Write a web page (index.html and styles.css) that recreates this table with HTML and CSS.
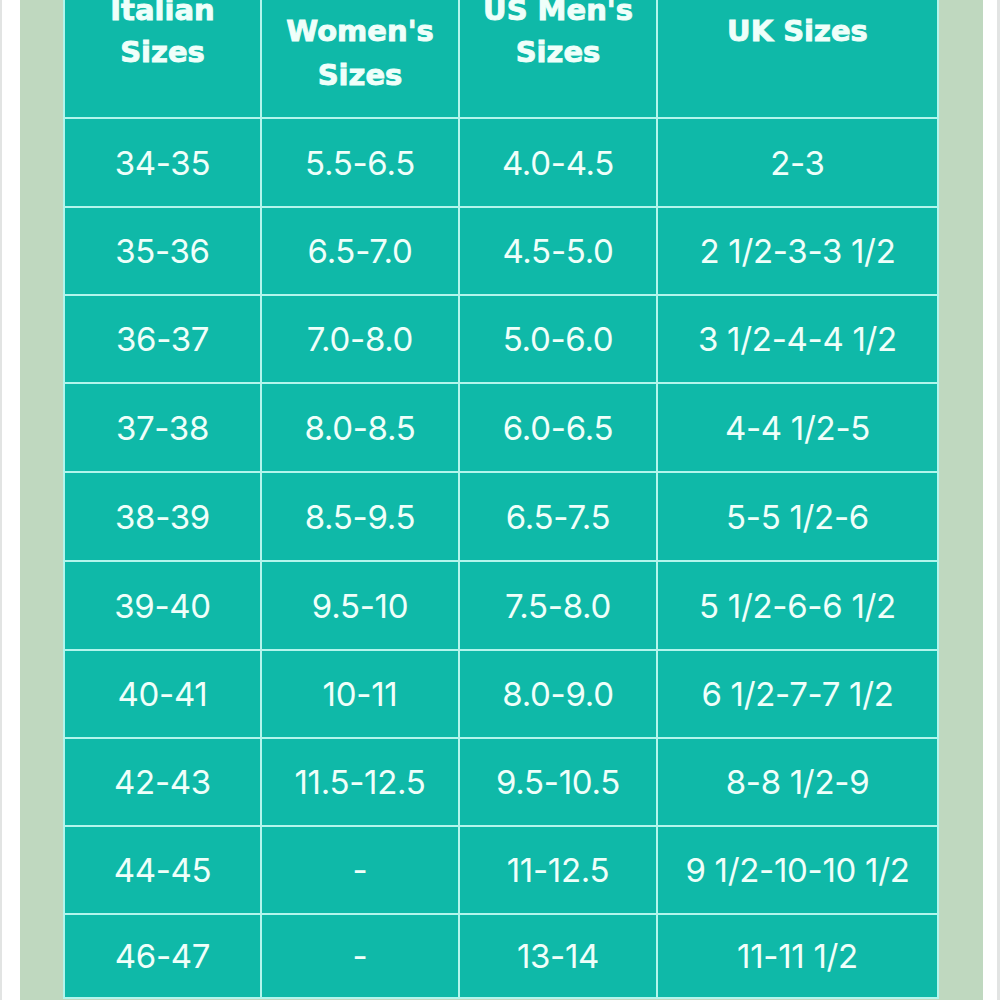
FILE: index.html
```html
<!DOCTYPE html>
<html>
<head>
<meta charset="utf-8">
<link rel="stylesheet" href="styles.css">
</head>
<body>
<div class="frame">
  <div class="panel">
    <div class="chart">
      <div class="cell head high">Italian<br>Sizes</div>
      <div class="cell head low">Women's<br>Sizes</div>
      <div class="cell head high">US Men's<br>Sizes</div>
      <div class="cell head low">UK Sizes</div>

      <div class="cell">34-35</div><div class="cell">5.5-6.5</div><div class="cell">4.0-4.5</div><div class="cell">2-3</div>
      <div class="cell">35-36</div><div class="cell">6.5-7.0</div><div class="cell">4.5-5.0</div><div class="cell">2 1/2-3-3 1/2</div>
      <div class="cell">36-37</div><div class="cell">7.0-8.0</div><div class="cell">5.0-6.0</div><div class="cell">3 1/2-4-4 1/2</div>
      <div class="cell">37-38</div><div class="cell">8.0-8.5</div><div class="cell">6.0-6.5</div><div class="cell">4-4 1/2-5</div>
      <div class="cell">38-39</div><div class="cell">8.5-9.5</div><div class="cell">6.5-7.5</div><div class="cell">5-5 1/2-6</div>
      <div class="cell">39-40</div><div class="cell">9.5-10</div><div class="cell">7.5-8.0</div><div class="cell">5 1/2-6-6 1/2</div>
      <div class="cell">40-41</div><div class="cell">10-11</div><div class="cell">8.0-9.0</div><div class="cell">6 1/2-7-7 1/2</div>
      <div class="cell">42-43</div><div class="cell">11.5-12.5</div><div class="cell">9.5-10.5</div><div class="cell">8-8 1/2-9</div>
      <div class="cell">44-45</div><div class="cell">-</div><div class="cell">11-12.5</div><div class="cell">9 1/2-10-10 1/2</div>
      <div class="cell">46-47</div><div class="cell">-</div><div class="cell">13-14</div><div class="cell">11-11 1/2</div>
    </div>
  </div>
</div>
</body>
</html>
```
FILE: styles.css
```css
html, body {
  margin: 0;
  padding: 0;
  background: #ffffff;
  overflow: hidden;
}

.frame {
  height: 1000px;
  box-sizing: border-box;
  border-left: 2px solid #e2e4e3;
  border-right: 3px solid #e2e4e3;
  padding: 0 14px 0 18px;
  background: #ffffff;
}

.panel {
  height: 100%;
  background: #bfd8bf;
  padding: 0 44px 0 43px;
  overflow: hidden;
}

.chart {
  margin-top: -13px;
  display: grid;
  grid-template-columns: 195px 196px 196px 279px;
  grid-template-rows: 128px 87px 86px 86px 87px 87px 87px 86px 86px 86px 82px;
  gap: 2px;
  padding: 2px;
  background: #b3f5ec;
}

.cell {
  background: #0fb9a8;
  color: #effffa;
  display: flex;
  align-items: center;
  justify-content: center;
  text-align: center;
  font-family: "Inter", "Liberation Sans", sans-serif;
  font-variant-numeric: proportional-nums;
  font-size: 33px;
  font-weight: 400;
  letter-spacing: -0.3px;
}

.head {
  align-items: flex-start;
  font-family: "DejaVu Sans", "Inter", sans-serif;
  font-weight: 700;
  font-size: 29px;
  line-height: 44px;
  letter-spacing: 0;
  -webkit-text-stroke: 0.9px #effffa;
}

.head.high {
  padding-top: 0;
  line-height: 42px;
}

.head.low {
  padding-top: 20px;
}
```
